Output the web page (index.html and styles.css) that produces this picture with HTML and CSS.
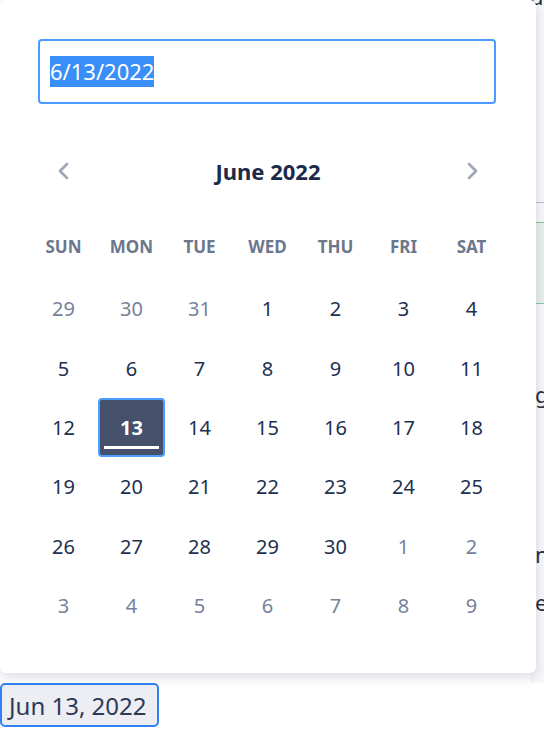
FILE: index.html
```html
<!DOCTYPE html>
<html>
<head>
<meta charset="utf-8">
<link rel="stylesheet" href="styles.css">
</head>
<body>
<div class="page">
  <div class="bg">
    <div class="strip">
      <div class="glyph glyph-top">d</div>
      <div class="rule"></div>
      <div class="green-band"></div>
      <div class="glyph glyph-g">g</div>
      <div class="glyph glyph-n">n</div>
      <div class="glyph glyph-e">e</div>
    </div>
  </div>
  <button class="trigger">Jun 13, 2022</button>

  <div class="popover">
    <div class="date-input"><span class="sel">6/13/2022</span></div>
    <div class="cal">
      <div class="cal-head">
        <svg class="chev" width="12" height="18" viewBox="0 0 12 18"><path d="M10 2 L3 9 L10 16" fill="none" stroke="#a0a8b8" stroke-width="2.8" stroke-linecap="round" stroke-linejoin="round"/></svg>
        <div class="title">June 2022</div>
        <svg class="chev" width="12" height="18" viewBox="0 0 12 18"><path d="M2 2 L9 9 L2 16" fill="none" stroke="#a0a8b8" stroke-width="2.8" stroke-linecap="round" stroke-linejoin="round"/></svg>
      </div>
      <div class="weekdays">
        <div>SUN</div><div>MON</div><div>TUE</div><div>WED</div><div>THU</div><div>FRI</div><div>SAT</div>
      </div>
      <div class="days">
        <div class="d out">29</div><div class="d out">30</div><div class="d out">31</div><div class="d">1</div><div class="d">2</div><div class="d">3</div><div class="d">4</div>
        <div class="d">5</div><div class="d">6</div><div class="d">7</div><div class="d">8</div><div class="d">9</div><div class="d">10</div><div class="d">11</div>
        <div class="d">12</div><div class="d selected">13</div><div class="d">14</div><div class="d">15</div><div class="d">16</div><div class="d">17</div><div class="d">18</div>
        <div class="d">19</div><div class="d">20</div><div class="d">21</div><div class="d">22</div><div class="d">23</div><div class="d">24</div><div class="d">25</div>
        <div class="d">26</div><div class="d">27</div><div class="d">28</div><div class="d">29</div><div class="d">30</div><div class="d out">1</div><div class="d out">2</div>
        <div class="d out">3</div><div class="d out">4</div><div class="d out">5</div><div class="d out">6</div><div class="d out">7</div><div class="d out">8</div><div class="d out">9</div>
      </div>
    </div>
  </div>
</div>
</body>
</html>
```
FILE: styles.css
```css
html, body {
  margin: 0;
  padding: 0;
  background: #ffffff;
}
body {
  font-family: "Noto Sans", "Open Sans", "DejaVu Sans", sans-serif;
  width: 544px;
  height: 733px;
  overflow: hidden;
}
.page {
  position: relative;
  width: 544px;
  height: 733px;
}
.bg {
  height: 683px;
  display: flex;
  justify-content: flex-end;
}
.strip {
  width: 14px;
  overflow: hidden;
  display: flex;
  flex-direction: column;
  background: #f6f7f9;
}
.strip > div {
  flex-shrink: 0;
}
.glyph {
  font-size: 22px;
  line-height: 22px;
  color: #2a2f3a;
  padding-left: 5px;
  height: 22px;
}
.glyph-top { margin-top: -15px; padding-left: 0; }
.rule {
  margin-top: 195px;
  height: 1px;
  background: #b7c2d6;
}
.green-band {
  margin-top: 19px;
  height: 80px;
  border-top: 1px solid #8cc79a;
  border-bottom: 1px solid #8cc79a;
  background: #e8efea;
}
.glyph-g { margin-top: 79px; }
.glyph-n { margin-top: 138px; }
.glyph-e { margin-top: 26px; }

.trigger {
  display: block;
  margin: 0;
  height: 44px;
  padding: 0 10px 0 7px;
  font-family: inherit;
  font-size: 24px;
  color: #2d3a57;
  background: #eceef3;
  border: 2px solid #3381f6;
  border-radius: 5px;
}

.popover {
  position: absolute;
  top: 0;
  left: 0;
  width: 536px;
  height: 673px;
  background: #ffffff;
  border-radius: 6px;
  box-shadow: 0 4px 12px rgba(30, 40, 70, 0.16);
  overflow: hidden;
}
.date-input {
  margin: 39px 40px 0 38px;
  height: 65px;
  box-sizing: border-box;
  border: 2px solid #4a9bff;
  border-radius: 4px;
  padding-left: 10px;
  display: flex;
  align-items: center;
}
.sel {
  background: #3a8ef8;
  color: #ffffff;
  font-size: 22px;
  line-height: 31px;
}
.cal {
  margin-left: 30px;
  width: 475px;
}
.cal-head {
  margin-top: 47px;
  height: 40px;
  display: flex;
  align-items: center;
  justify-content: space-between;
  padding: 0 26px 0 27px;
}
.title {
  font-size: 22px;
  font-weight: 700;
  color: #1c2a4c;
}
.weekdays, .days {
  display: grid;
  grid-template-columns: repeat(7, 67px);
  column-gap: 1px;
}
.weekdays {
  margin-top: 40px;
  height: 30px;
  align-items: center;
}
.weekdays div {
  text-align: center;
  font-size: 17px;
  font-weight: 700;
  color: #6b778c;
}
.days {
  margin-top: 18px;
  grid-auto-rows: 59.4px;
}
.d {
  display: flex;
  align-items: center;
  justify-content: center;
  font-size: 20px;
  color: #22304f;
}
.d.out {
  color: #76819a;
}
.d.selected {
  position: relative;
  box-sizing: border-box;
  background: #45516b;
  border: 2px solid #4d9cff;
  border-radius: 4px;
  color: #ffffff;
  font-weight: 700;
}
.d.selected::after {
  content: "";
  position: absolute;
  left: 4px;
  right: 4px;
  bottom: 6px;
  height: 3px;
  background: #ffffff;
}
```
